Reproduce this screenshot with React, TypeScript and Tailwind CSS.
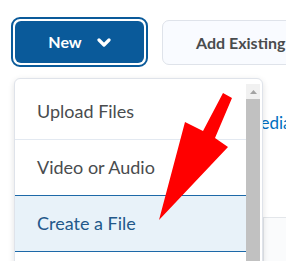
import React from 'react';

const menuItems = ['Upload Files', 'Video or Audio', 'Create a File'];

function Chevron() {
  return (
    <svg width="14" height="9" viewBox="0 0 14 9" fill="none">
      <path d="M2 2 L7 7 L12 2" stroke="white" strokeWidth="3.2" strokeLinecap="round" strokeLinejoin="round" />
    </svg>
  );
}

export default function App() {
  return (
    <div className="relative w-[286px] h-[261px] overflow-hidden bg-white font-['Lato','Liberation_Sans',sans-serif]">
      {/* page behind the menu */}
      <div className="absolute left-[245px] top-[110px] text-[17px] text-[#006fbf] whitespace-nowrap">Media</div>
      <div className="absolute left-[263px] top-[217px] w-[30px] h-[50px] border-t border-l border-[#e3e6ea] bg-[#fafbfc]" />

      {/* toolbar */}
      <div className="flex items-center gap-[14px] pl-[11px] pt-[17px]">
        <div className="rounded-[9px] border-2 border-[#0a5a9a] p-[2px] shrink-0">
          <button className="flex items-center justify-center gap-[15px] w-[129px] h-[42px] rounded-[6px] bg-[#0a5a9a] text-white font-bold text-[16px]">
            New
            <Chevron />
          </button>
        </div>
        <button className="shrink-0 mt-[1px] h-[45px] w-[150px] rounded-[7px] border border-[#dfe3ea] bg-[#f9fbff] pl-[33px] text-left font-bold text-[16px] text-[#494c4e] whitespace-nowrap">
          Add Existing
        </button>
      </div>

      {/* dropdown menu */}
      <div className="absolute left-[14px] top-[78px] w-[249px] h-[200px] flex rounded-[6px] border border-[#dfe3ea] bg-white shadow-[0_2px_6px_rgba(0,0,0,0.12)]">
        <div className="flex-1 pt-[5px]">
          {menuItems.map((label, i) => (
            <div
              key={label}
              className={
                i === 2
                  ? 'h-[57px] flex items-center pl-[22px] text-[18px] text-[#22588a] bg-[#e8f2f9] border-y border-[#1d69a8]'
                  : i === 0
                  ? 'h-[56px] flex items-center pl-[22px] text-[18px] text-[#494c4e] border-b border-[#e3e9f1]'
                  : 'h-[55px] flex items-center pl-[22px] text-[18px] text-[#494c4e]'
              }
            >
              {label}
            </div>
          ))}
          <div className="h-[55px]" />
        </div>
        <div className="w-[14px] mt-[5px] mr-[2px] flex flex-col bg-[#f1f1f1]">
          <div className="h-[15px] flex items-center justify-center">
            <svg width="7" height="4" viewBox="0 0 7 4">
              <path d="M0 4 L3.5 0 L7 4 Z" fill="#a3a3a3" />
            </svg>
          </div>
          <div className="flex-1 bg-[#c1c1c1]" />
        </div>
      </div>

      {/* red arrow */}
      <svg className="absolute left-0 top-0" width="286" height="261" viewBox="0 0 286 261">
        <polygon points="223,93 232,98 215,138 228,147 159,220 185,122 203,131" fill="#ff0000" />
      </svg>
    </div>
  );
}
